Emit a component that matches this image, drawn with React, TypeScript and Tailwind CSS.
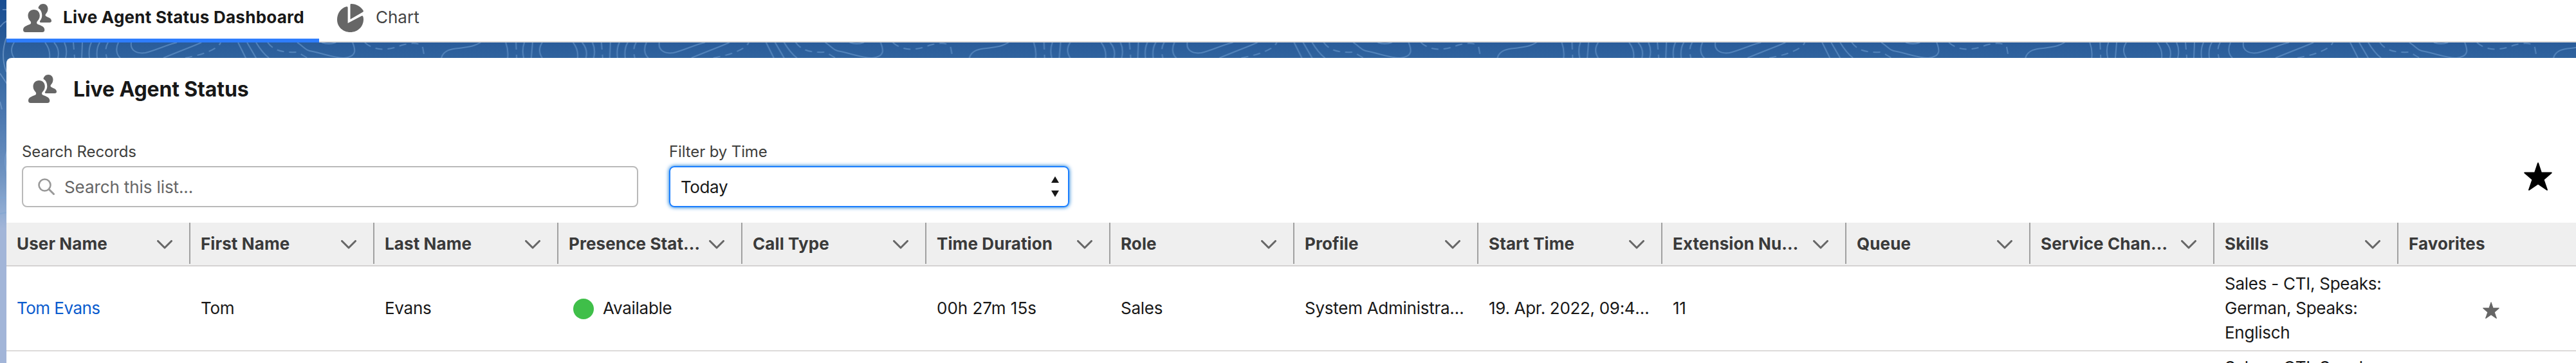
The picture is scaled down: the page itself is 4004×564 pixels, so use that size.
const columns = [
  "User Name",
  "First Name",
  "Last Name",
  "Presence Status",
  "Call Type",
  "Time Duration",
  "Role",
  "Profile",
  "Start Time",
  "Extension Number",
  "Queue",
  "Service Channels",
  "Skills",
];

const rows = [
  {
    user: "Tom Evans",
    first: "Tom",
    last: "Evans",
    presence: "Available",
    duration: "00h 27m 15s",
    role: "Sales",
    profile: "System Administrator",
    start: "19. Apr. 2022, 09:45:12",
    extension: "11",
    skills: "Sales - CTI, Speaks: German, Speaks: Englisch",
  },
];

const tableGrid = "grid grid-cols-[repeat(13,286px)_1fr]";

export default function App() {
  return (
    <div className="relative flex h-[564px] w-[4004px] flex-col overflow-hidden bg-[linear-gradient(180deg,#184d92_0%,#2a5c9a_12%,#31659f_17%,#4c78b0_32%,#6f93c1_48%,#8fabd2_58%,#a2b5d8_63%,#a2b5d8_100%)] pl-[10px] font-['Inter','Liberation_Sans',sans-serif] text-[26px] text-[#181818]">
      <BackgroundPattern />

      {/* tabs */}
      <nav className="relative flex h-[66px] shrink-0 border-b-2 border-[#dddbda] bg-white">
        <div className="flex h-[66px] w-[486px] items-center border-b-6 border-[#2f7dfd] pb-[4px] pl-[26px]">
          <PeopleIcon />
          <span className="pb-[3px] pl-[18px] font-bold tracking-[0.01em]">
            Live Agent Status Dashboard
          </span>
        </div>
        <div className="flex h-[56px] items-center pl-[28px]">
          <PieIcon />
          <span className="pb-[3px] pl-[19px] text-[#444]">Chart</span>
        </div>
      </nav>

      {/* card */}
      <main className="relative mt-[24px] flex grow flex-col rounded-tl-[8px] bg-white">
        <header className="flex h-[96px] items-center pl-[34px]">
          <PeopleIcon />
          <h1 className="pt-[2px] pl-[26px] text-[32px] font-bold tracking-[-0.004em]">
            Live Agent Status
          </h1>
        </header>

        <div className="flex h-[160px] pl-[24px]">
          <div className="w-[958px] pt-[32px]">
            <label className="block text-[24px] leading-[36px] tracking-[-0.005em] text-[#3e3e3c]">
              Search Records
            </label>
            <div className="mt-[4px] flex h-[64px] items-center rounded-[8px] border-2 border-[#b9b9b9] pl-[23px] text-[#666]">
              <SearchIcon />
              <span className="pl-[15px] tracking-[-0.004em]">Search this list...</span>
            </div>
          </div>

          <div className="ml-[48px] w-[622px] pt-[32px]">
            <label className="block text-[24px] leading-[36px] tracking-[-0.005em] text-[#3e3e3c]">
              Filter by Time
            </label>
            <div className="mt-[4px] flex h-[64px] items-center justify-between rounded-[8px] border-2 border-[#1b7fff] pr-[14px] pl-[16px] shadow-[0_0_6px_#0070d2]">
              <span className="tracking-[-0.015em]">Today</span>
              <SortArrows />
            </div>
          </div>

          <div className="ml-auto pt-[66px] pr-[37px]">
            <StarIcon className="h-[44px] w-[44px] text-black" />
          </div>
        </div>

        {/* table */}
        <div className={`${tableGrid} h-[68px] shrink-0 border-b-2 border-[#d4d2d2] bg-[#efefef] font-bold text-[#3a3a3a]`}>
          {columns.map((name) => (
            <div
              key={name}
              className="flex h-[64px] min-w-0 items-center justify-between border-r-2 border-[#a0a0a0] pr-[26px] pl-[16px]"
            >
              <span className="max-w-[208px] truncate tracking-[0.004em]">{name}</span>
              <ChevronIcon />
            </div>
          ))}
          <div className="flex h-[64px] items-center pl-[16px] tracking-[0.004em]">Favorites</div>
        </div>

        {rows.map((row) => (
          <div
            key={row.user}
            className={`${tableGrid} h-[132px] shrink-0 items-center border-b-2 border-[#dddbda] leading-[38px] tracking-[-0.01em]`}
          >
            <Cell text={row.user} className="tracking-[-0.02em] text-[#0b5cce]" />
            <Cell text={row.first} />
            <Cell text={row.last} />
            <div className="flex items-center pl-[23px]">
              <span className="mt-[2px] h-[32px] w-[32px] rounded-full bg-[#3fbf49]" />
              <span className="pl-[14px]">{row.presence}</span>
            </div>
            <span />
            <Cell text={row.duration} className="tracking-normal" />
            <Cell text={row.role} />
            <Cell text={row.profile} />
            <Cell text={row.start} className="tracking-[-0.012em]" />
            <Cell text={row.extension} />
            <span />
            <span />
            <div className="px-[16px]">{row.skills}</div>
            <div className="pt-[5px] pl-[131px]">
              <StarIcon className="h-[26px] w-[26px] text-[#666]" />
            </div>
          </div>
        ))}

        <div className={`${tableGrid} h-[18px] shrink-0 overflow-hidden leading-[38px] tracking-[-0.01em]`}>
          <div className="col-start-13 px-[16px] pt-[6px]">Sales - CTI, Speaks:</div>
        </div>
      </main>
    </div>
  );
}

function Cell({ text, className = "" }: { text: string; className?: string }) {
  return <div className={`truncate pr-[20px] pl-[16px] ${className}`}>{text}</div>;
}

// contour lines, repeated along the strip between the tabs and the card
function BackgroundPattern() {
  return (
    <svg className="absolute inset-0 h-full w-full" fill="none" aria-hidden="true">
      <defs>
        <pattern id="contours" width="820.750" height="24" y="66" patternUnits="userSpaceOnUse">
          <g stroke="#5f8fc4" strokeOpacity="0.75" strokeWidth="2">
            <path d="M22 0Q14 12 22 24M70 0C76 8 78 16 77 24M84 0C91 8 92 16 90 24M100 0C104 8 104 16 102 24" />
            <path d="M128 0L127 24M142 0C138 8 138 16 139 24M155 0C150 8 150 16 151 24M184 0C180 8 180 18 187 24" />
            <path d="M204 0C202 12 212 18 226 16C240 13 258 4 275 0M254 24C280 13 300 6 313 0" />
            <path d="M370 0L382 24M384 0L398 24M398 0C404 10 410 18 418 24" />
            <path d="M462 0C474 8 474 12 486 14C505 18 520 24 535 24C556 22 552 10 548 0M500 0Q511 4 522 0" />
            <path d="M686 24C690 8 710 10 720 8C735 6 740 4 747 0" />
            <path d="M786 0C789 8 790 16 789 24M815 0C812 8 812 16 814 24" />
            <path
              d="M114 0L116 24M168 0C163 8 164 16 166 24M288 24C310 20 338 12 343 0M416 0C425 12 437 16 462 15C468 18 472 21 478 24M567 0C580 12 600 14 625 4C638 0 655 0 657 8L660 24M802 0L803 24"
              strokeDasharray="11 8"
            />
          </g>
          <path d="M7 0L5 24" stroke="#5f8fc4" strokeOpacity="0.75" strokeWidth="2" />
        </pattern>
      </defs>
      <rect x="10" y="66" width="3994" height="24" fill="url(#contours)" />
      <g stroke="#7fa5d2" strokeOpacity="0.6" strokeWidth="2">
        <path d="M4 15H10M10 33Q4 36 0 42M10 58Q0 86 10 112M0 114L12 132M0 158L3 170" />
        <path d="M12 232Q4 250 12 272M0 307H10M0 332L10 330" />
      </g>
    </svg>
  );
}

function PeopleIcon() {
  return (
    <svg className="shrink-0" width="44" height="44" viewBox="0 0 44 44" fill="#666" aria-hidden="true">
      <path d="M16.7 9C11 9 7.500 13 7.500 18.500c0 4 2 6.500 4 8.800 1.200 1.800.8 3.700-1 4.500C5 34 0 35.500 0 40.500 0 43 1.500 44 3.500 44h26.200c2 0 3.600-1 3.600-3.500 0-5-5-6.500-10.500-8.700-1.800-.8-2.200-2.700-1-4.500 2-2.300 4-4.800 4-8.800C25.800 13 22.400 9 16.700 9z" />
      <path d="M31 0c-4 0-7 2.800-7.500 6.800 4 2.200 5.800 6.700 5.800 11.200 0 3-.8 5-2.800 8-1 1.500-1 2.500.5 3h14c2 0 3-1 3-2.500 0-4-4-5-8-7-1.500-1-2-2-1-3.500 1.800-2 3.500-4.700 3.500-8.500C38.500 3.500 35.500 0 31 0z" />
    </svg>
  );
}

function PieIcon() {
  return (
    <svg className="shrink-0" width="41" height="44" viewBox="0 0 41 44" fill="#666" aria-hidden="true">
      <path d="M14.500 4.200C15.800 4 16.600 4.500 16.600 5.800V30L38.500 18.500C40 18 41 20 41 24C41 35.500 32 44 20.500 44S0 35.500 0 24.500C0 14.500 6 6.500 14.500 4.200z" />
      <path d="M22 0C30 .2 37 4.200 40.700 10.500c.5 1 .2 1.700-.8 2.200L20.500 24V1.500C20.500.5 21 0 22 0z" />
    </svg>
  );
}

function SearchIcon() {
  return (
    <svg width="26" height="26" viewBox="0 0 26 26" fill="none" aria-hidden="true">
      <circle cx="10.500" cy="10.500" r="9" stroke="#999" strokeWidth="2.600" />
      <path d="M17 17L24.500 24.500" stroke="#999" strokeWidth="3" strokeLinecap="round" />
    </svg>
  );
}

function SortArrows() {
  return (
    <svg width="12" height="32" viewBox="0 0 12 32" fill="#181818" aria-hidden="true">
      <path d="M6 0L12 10H0zM6 32L0 22h12z" />
    </svg>
  );
}

function ChevronIcon() {
  return (
    <svg className="mt-[4px] shrink-0" width="24" height="14" viewBox="0 0 24 14" fill="none" aria-hidden="true">
      <path d="M1.500 1.500L12 12L22.500 1.500" stroke="#666" strokeWidth="3" strokeLinecap="round" strokeLinejoin="round" />
    </svg>
  );
}

function StarIcon({ className }: { className: string }) {
  return (
    <svg className={className} viewBox="0 0 44 44" fill="currentColor" aria-hidden="true">
      <path
        d="M22 1.500L27 16.500H42.700L30.500 27L36 43L22 33.500L8 43L13.500 27L1.300 16.500H17z"
        stroke="currentColor"
        strokeWidth="2"
        strokeLinejoin="round"
      />
    </svg>
  );
}
